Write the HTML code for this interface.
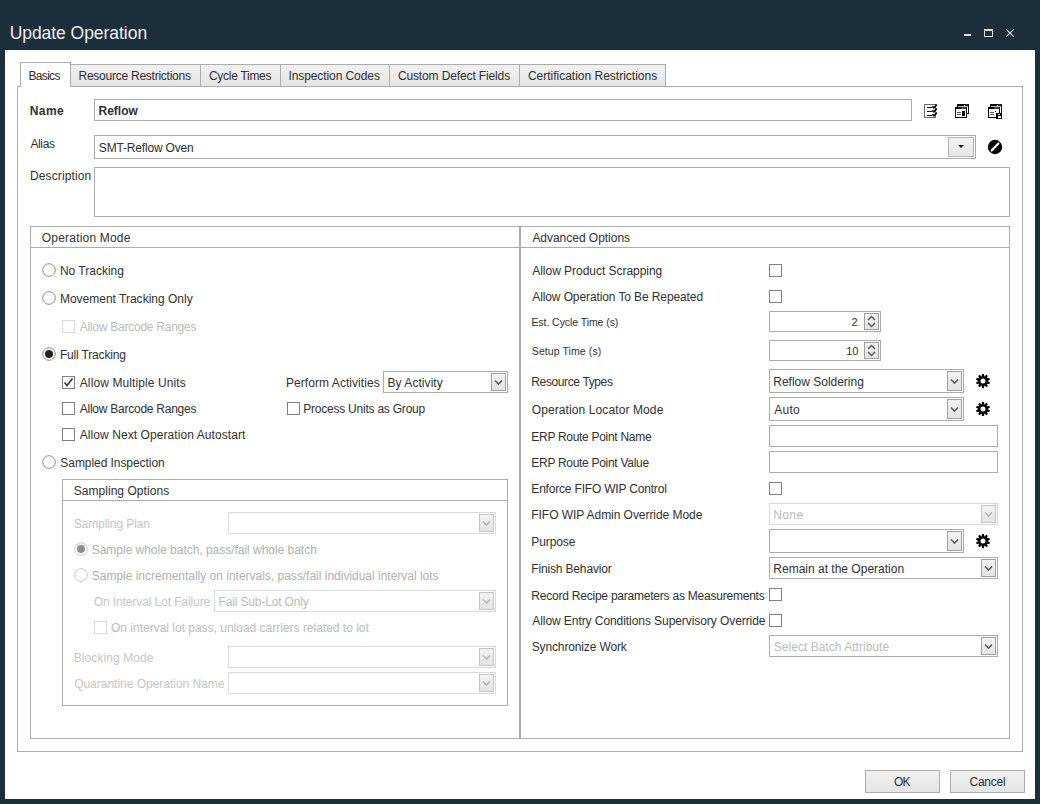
<!DOCTYPE html>
<html><head><meta charset="utf-8"><title>Update Operation</title>
<style>
html,body{margin:0;padding:0;}
body{width:1040px;height:804px;overflow:hidden;background:#1b2f3d;position:relative;font-family:"Liberation Sans", sans-serif;}
body>div,body>span,body>svg{position:absolute;box-sizing:border-box;}
body>span{white-space:pre;}
</style></head><body>
<div style="left:5px;top:50px;width:1030px;height:749px;border:0;background:#ffffff;"></div>
<span style="top:25.19px;font-size:17.5px;line-height:17.5px;color:#f0f0f0;letter-spacing:-0.045px;left:9.65px;">Update Operation</span>
<div style="left:964px;top:34px;width:7px;height:2px;border:0;background:#e0e0e0;"></div>
<div style="left:984px;top:29px;width:9px;height:8px;border:1px solid #e0e0e0;border-top-width:2px"></div>
<svg style="left:1005px;top:28px" width="10" height="10" viewBox="0 0 10 10"><path d="M1.3 1.3 L8.7 8.7 M8.7 1.3 L1.3 8.7" stroke="#e0e0e0" stroke-width="1.2"/></svg>
<div style="left:17px;top:86px;width:1006px;height:666px;border:1px solid #acacac;background:#fff;"></div>
<div style="left:70px;top:64px;width:131px;height:23px;border:1px solid #acacac;background:linear-gradient(#f0f0f0,#e5e5e5);"></div>
<span style="top:69.84px;font-size:12px;line-height:12px;color:#303030;letter-spacing:-0.248px;left:78.52px;">Resource Restrictions</span>
<div style="left:200px;top:64px;width:81px;height:23px;border:1px solid #acacac;background:linear-gradient(#f0f0f0,#e5e5e5);"></div>
<span style="top:69.84px;font-size:12px;line-height:12px;color:#303030;letter-spacing:-0.270px;left:208.89px;">Cycle Times</span>
<div style="left:280px;top:64px;width:110px;height:23px;border:1px solid #acacac;background:linear-gradient(#f0f0f0,#e5e5e5);"></div>
<span style="top:69.84px;font-size:12px;line-height:12px;color:#303030;letter-spacing:-0.080px;left:288.39px;">Inspection Codes</span>
<div style="left:389px;top:64px;width:131px;height:23px;border:1px solid #acacac;background:linear-gradient(#f0f0f0,#e5e5e5);"></div>
<span style="top:69.84px;font-size:12px;line-height:12px;color:#303030;letter-spacing:-0.127px;left:397.89px;">Custom Defect Fields</span>
<div style="left:519px;top:64px;width:147px;height:23px;border:1px solid #acacac;background:linear-gradient(#f0f0f0,#e5e5e5);"></div>
<span style="top:69.84px;font-size:12px;line-height:12px;color:#303030;letter-spacing:-0.003px;left:527.89px;">Certification Restrictions</span>
<div style="left:20px;top:62px;width:51px;height:25px;border:1px solid #acacac;border-bottom:0;background:#fff"></div>
<span style="top:69.84px;font-size:12px;line-height:12px;color:#303030;letter-spacing:-0.685px;left:28.52px;">Basics</span>
<span style="top:104.84px;font-size:12px;line-height:12px;color:#303030;letter-spacing:0.442px;font-weight:bold;left:29.70px;">Name</span>
<div style="left:94px;top:99px;width:818px;height:22px;border:1px solid #ababab;background:#fff;"></div>
<span style="top:104.84px;font-size:12px;line-height:12px;color:#303030;letter-spacing:-0.033px;font-weight:bold;left:98.60px;">Reflow</span>
<span style="top:137.84px;font-size:12px;line-height:12px;color:#303030;letter-spacing:-0.390px;left:30.48px;">Alias</span>
<div style="left:94px;top:135px;width:882px;height:24px;border:1px solid #ababab;background:#fff;"></div>
<div style="left:948px;top:137px;width:26px;height:20px;border:1px solid #b4b4b4;background:linear-gradient(#f3f3f3,#e6e6e6);"></div>
<svg style="left:957px;top:144px" width="8" height="5" viewBox="0 0 8 5"><path d="M1 1 L7 1 L4 4 Z" fill="#111"/></svg>
<span style="top:141.84px;font-size:12px;line-height:12px;color:#303030;letter-spacing:-0.181px;left:98.86px;">SMT-Reflow Oven</span>
<span style="top:169.84px;font-size:12px;line-height:12px;color:#303030;letter-spacing:0.123px;left:30.02px;">Description</span>
<div style="left:94px;top:167px;width:916px;height:50px;border:1px solid #ababab;background:#fff;"></div>
<svg style="left:921px;top:101px" width="20" height="20" viewBox="0 0 20 20" shape-rendering="crispEdges">
<rect x="3.5" y="3.5" width="11" height="13" fill="#fff" stroke="#6a6a6a" stroke-width="1"/>
<path d="M6 6.5h4.5M6 10.5h4.5M6 14.5h4.5" stroke="#111" stroke-width="1"/>
<g shape-rendering="geometricPrecision" fill="none" stroke="#000" stroke-width="1.6"><path d="M11.3 5.2 L12.9 6.9 L15.8 3.6M11.3 9.2 L12.9 10.9 L15.8 7.6M11.3 13.2 L12.9 14.9 L15.8 11.6"/></g>
</svg>
<svg style="left:952px;top:101px" width="20" height="20" viewBox="0 0 20 20" shape-rendering="crispEdges"><rect x="5.5" y="3.5" width="11" height="9" fill="#fff" stroke="#111" stroke-width="1"/>
<rect x="6" y="3" width="6" height="2" fill="#000"/><rect x="13" y="3" width="3" height="2" fill="#222"/>
<rect x="6" y="5" width="10" height="1" fill="#bbb"/>
<rect x="3.5" y="6.5" width="11" height="10" fill="#fff" stroke="#000" stroke-width="1.3"/>
<rect x="3" y="6" width="6" height="2" fill="#000"/><rect x="9" y="6" width="5" height="2" fill="#444"/>
<rect x="5" y="11" width="4" height="1" fill="#555"/><rect x="5" y="13" width="4" height="1" fill="#555"/>
<rect x="10" y="10" width="3" height="5" fill="#000"/>
</svg>
<svg style="left:985px;top:101px" width="20" height="20" viewBox="0 0 20 20" shape-rendering="crispEdges"><rect x="5.5" y="3.5" width="11" height="9" fill="#fff" stroke="#111" stroke-width="1"/>
<rect x="6" y="3" width="6" height="2" fill="#000"/><rect x="13" y="3" width="3" height="2" fill="#222"/>
<rect x="6" y="5" width="10" height="1" fill="#bbb"/>
<rect x="3.5" y="6.5" width="11" height="10" fill="#fff" stroke="#000" stroke-width="1.3"/>
<rect x="3" y="6" width="6" height="2" fill="#000"/><rect x="9" y="6" width="5" height="2" fill="#444"/>
<rect x="5" y="11" width="4" height="1" fill="#555"/><rect x="5" y="13" width="4" height="1" fill="#555"/>
<rect x="10" y="10" width="1" height="1" fill="#000"/>
<rect x="11" y="12" width="6" height="6" fill="#000"/>
<rect x="13" y="13" width="2" height="1" fill="#fff"/>
<rect x="13" y="15" width="3" height="2" fill="#fff"/>
</svg>
<svg style="left:987px;top:139px" width="16" height="16" viewBox="0 0 16 16"><circle cx="8" cy="8" r="7.2" fill="#000"/><path d="M4.6 11.4 L11.4 4.6" stroke="#fff" stroke-width="2.1" stroke-linecap="round"/></svg>
<div style="left:30px;top:226px;width:490px;height:513px;border:1px solid #acacac;background:transparent;"></div>
<div style="left:31px;top:247px;width:488px;height:1px;border:0;background:#acacac;"></div>
<span style="top:231.84px;font-size:12px;line-height:12px;color:#303030;letter-spacing:0.195px;left:41.83px;">Operation Mode</span>
<div style="left:520px;top:226px;width:490px;height:513px;border:1px solid #acacac;background:transparent;"></div>
<div style="left:521px;top:247px;width:488px;height:1px;border:0;background:#acacac;"></div>
<span style="top:231.84px;font-size:12px;line-height:12px;color:#303030;letter-spacing:-0.027px;left:532.38px;">Advanced Options</span>
<svg style="left:42px;top:263px" width="14" height="14" viewBox="0 0 14 14"><circle cx="7" cy="7" r="6.3" fill="#fff" stroke="#8a8a8a" stroke-width="1"/></svg>
<span style="top:264.84px;font-size:12px;line-height:12px;color:#303030;letter-spacing:-0.002px;left:59.92px;">No Tracking</span>
<svg style="left:42px;top:291px" width="14" height="14" viewBox="0 0 14 14"><circle cx="7" cy="7" r="6.3" fill="#fff" stroke="#8a8a8a" stroke-width="1"/></svg>
<span style="top:292.84px;font-size:12px;line-height:12px;color:#303030;letter-spacing:0.002px;left:59.92px;">Movement Tracking Only</span>
<div style="left:62px;top:320px;width:13px;height:13px;border:1px solid #d9d9d9;background:#fff"></div>
<span style="top:320.84px;font-size:12px;line-height:12px;color:#bcbcbc;letter-spacing:-0.247px;left:79.78px;">Allow Barcode Ranges</span>
<svg style="left:42px;top:347px" width="14" height="14" viewBox="0 0 14 14"><circle cx="7" cy="7" r="6.3" fill="#fff" stroke="#8a8a8a" stroke-width="1"/><circle cx="7" cy="7" r="4" fill="#222"/></svg>
<span style="top:348.84px;font-size:12px;line-height:12px;color:#303030;letter-spacing:-0.169px;left:59.92px;">Full Tracking</span>
<div style="left:62px;top:376px;width:13px;height:13px;border:1px solid #7f7f7f;background:#fff"></div>
<svg style="left:62px;top:376px" width="13" height="13" viewBox="0 0 13 13"><path d="M2.5 6.5 L5 9.5 L10.5 2.5" fill="none" stroke="#333" stroke-width="1.6"/></svg>
<span style="top:376.84px;font-size:12px;line-height:12px;color:#303030;letter-spacing:0.101px;left:79.78px;">Allow Multiple Units</span>
<div style="left:62px;top:402px;width:13px;height:13px;border:1px solid #7f7f7f;background:#fff"></div>
<span style="top:402.84px;font-size:12px;line-height:12px;color:#303030;letter-spacing:-0.247px;left:79.78px;">Allow Barcode Ranges</span>
<div style="left:62px;top:428px;width:13px;height:13px;border:1px solid #7f7f7f;background:#fff"></div>
<span style="top:428.84px;font-size:12px;line-height:12px;color:#303030;letter-spacing:0.075px;left:79.78px;">Allow Next Operation Autostart</span>
<svg style="left:42px;top:455px" width="14" height="14" viewBox="0 0 14 14"><circle cx="7" cy="7" r="6.3" fill="#fff" stroke="#8a8a8a" stroke-width="1"/></svg>
<span style="top:456.84px;font-size:12px;line-height:12px;color:#303030;letter-spacing:-0.064px;left:60.36px;">Sampled Inspection</span>
<span style="top:376.84px;font-size:12px;line-height:12px;color:#303030;letter-spacing:0.057px;left:286.02px;">Perform Activities</span>
<div style="left:383px;top:371px;width:125px;height:22px;border:1px solid #ababab;background:#fff;"></div>
<div style="left:491px;top:373px;width:15px;height:18px;border:1px solid #a0a0a0;background:linear-gradient(#f2f2f2,#e4e4e4);"></div>
<svg style="left:494px;top:378.5px" width="9" height="7" viewBox="0 0 9 7"><path d="M1 1.5 L4.5 5 L8 1.5" fill="none" stroke="#5a5a5a" stroke-width="1.6"/></svg>
<span style="top:376.84px;font-size:12px;line-height:12px;color:#303030;letter-spacing:0.057px;left:387.52px;">By Activity</span>
<div style="left:287px;top:402px;width:13px;height:13px;border:1px solid #7f7f7f;background:#fff"></div>
<span style="top:402.84px;font-size:12px;line-height:12px;color:#303030;letter-spacing:-0.225px;left:303.22px;">Process Units as Group</span>
<div style="left:62px;top:479px;width:446px;height:227px;border:1px solid #acacac;background:transparent;"></div>
<div style="left:63px;top:500px;width:444px;height:1px;border:0;background:#acacac;"></div>
<span style="top:484.84px;font-size:12px;line-height:12px;color:#303030;letter-spacing:0.051px;left:73.66px;">Sampling Options</span>
<span style="top:517.84px;font-size:12px;line-height:12px;color:#c6c6c6;letter-spacing:-0.089px;left:73.66px;">Sampling Plan</span>
<div style="left:228px;top:512px;width:268px;height:22px;border:1px solid #d9d9d9;background:#fff;"></div>
<div style="left:479px;top:514px;width:15px;height:18px;border:1px solid #c4c4c4;background:linear-gradient(#f2f2f2,#e4e4e4);"></div>
<svg style="left:482px;top:519.5px" width="9" height="7" viewBox="0 0 9 7"><path d="M1 1.5 L4.5 5 L8 1.5" fill="none" stroke="#b8b8b8" stroke-width="1.6"/></svg>
<svg style="left:74px;top:542px" width="14" height="14" viewBox="0 0 14 14"><circle cx="7" cy="7" r="6.3" fill="#fff" stroke="#c6c6c6" stroke-width="1"/><circle cx="7" cy="7" r="4" fill="#8f8f8f"/></svg>
<span style="top:543.84px;font-size:12px;line-height:12px;color:#b0b0b0;letter-spacing:-0.027px;left:91.76px;">Sample whole batch, pass/fail whole batch</span>
<svg style="left:74px;top:568px" width="14" height="14" viewBox="0 0 14 14"><circle cx="7" cy="7" r="6.3" fill="#fff" stroke="#c6c6c6" stroke-width="1"/></svg>
<span style="top:569.84px;font-size:12px;line-height:12px;color:#b0b0b0;letter-spacing:-0.010px;left:91.76px;">Sample incrementally on intervals, pass/fail individual interval lots</span>
<span style="top:595.84px;font-size:12px;line-height:12px;color:#c6c6c6;letter-spacing:-0.101px;left:93.73px;">On Interval Lot Failure</span>
<div style="left:214px;top:590px;width:282px;height:22px;border:1px solid #d9d9d9;background:#fff;"></div>
<div style="left:479px;top:592px;width:15px;height:18px;border:1px solid #c4c4c4;background:linear-gradient(#f2f2f2,#e4e4e4);"></div>
<svg style="left:482px;top:597.5px" width="9" height="7" viewBox="0 0 9 7"><path d="M1 1.5 L4.5 5 L8 1.5" fill="none" stroke="#b8b8b8" stroke-width="1.6"/></svg>
<span style="top:595.84px;font-size:12px;line-height:12px;color:#bcbcbc;letter-spacing:-0.151px;left:218.52px;">Fail Sub-Lot Only</span>
<div style="left:94px;top:621px;width:13px;height:13px;border:1px solid #d9d9d9;background:#fff"></div>
<span style="top:621.84px;font-size:12px;line-height:12px;color:#bcbcbc;letter-spacing:-0.006px;left:111.03px;">On interval lot pass, unload carriers related to lot</span>
<span style="top:651.84px;font-size:12px;line-height:12px;color:#c6c6c6;letter-spacing:0.087px;left:73.72px;">Blocking Mode</span>
<div style="left:228px;top:646px;width:268px;height:22px;border:1px solid #d9d9d9;background:#fff;"></div>
<div style="left:479px;top:648px;width:15px;height:18px;border:1px solid #c4c4c4;background:linear-gradient(#f2f2f2,#e4e4e4);"></div>
<svg style="left:482px;top:653.5px" width="9" height="7" viewBox="0 0 9 7"><path d="M1 1.5 L4.5 5 L8 1.5" fill="none" stroke="#b8b8b8" stroke-width="1.6"/></svg>
<span style="top:677.84px;font-size:12px;line-height:12px;color:#c6c6c6;letter-spacing:-0.015px;left:74.13px;">Quarantine Operation Name</span>
<div style="left:228px;top:672px;width:268px;height:22px;border:1px solid #d9d9d9;background:#fff;"></div>
<div style="left:479px;top:674px;width:15px;height:18px;border:1px solid #c4c4c4;background:linear-gradient(#f2f2f2,#e4e4e4);"></div>
<svg style="left:482px;top:679.5px" width="9" height="7" viewBox="0 0 9 7"><path d="M1 1.5 L4.5 5 L8 1.5" fill="none" stroke="#b8b8b8" stroke-width="1.6"/></svg>
<span style="top:264.84px;font-size:12px;line-height:12px;color:#303030;letter-spacing:-0.034px;left:532.28px;">Allow Product Scrapping</span>
<div style="left:769px;top:264px;width:13px;height:13px;border:1px solid #7f7f7f;background:#fff"></div>
<span style="top:290.84px;font-size:12px;line-height:12px;color:#303030;letter-spacing:-0.107px;left:532.28px;">Allow Operation To Be Repeated</span>
<div style="left:769px;top:290px;width:13px;height:13px;border:1px solid #7f7f7f;background:#fff"></div>
<span style="top:317.11px;font-size:10.5px;line-height:10.5px;color:#303030;letter-spacing:-0.066px;left:531.44px;">Est. Cycle Time (s)</span>
<div style="left:769px;top:311px;width:112px;height:21px;border:1px solid #ababab;background:#fff;"></div>
<div style="left:864px;top:313px;width:15px;height:17px;border:1px solid #a0a0a0;background:linear-gradient(#f2f2f2,#e4e4e4);"></div>
<svg style="left:866px;top:314px" width="11" height="15" viewBox="0 0 11 15"><path d="M2 6 L5.5 2.5 L9 6 M2 9 L5.5 12.5 L9 9" fill="none" stroke="#5a5a5a" stroke-width="1.5"/></svg>
<span style="top:316.69px;font-size:11px;line-height:11px;color:#303030;letter-spacing:0.881px;left:851.55px;">2</span>
<span style="top:346.11px;font-size:10.5px;line-height:10.5px;color:#303030;letter-spacing:0.088px;left:531.82px;">Setup Time (s)</span>
<div style="left:769px;top:340px;width:112px;height:21px;border:1px solid #ababab;background:#fff;"></div>
<div style="left:864px;top:342px;width:15px;height:17px;border:1px solid #a0a0a0;background:linear-gradient(#f2f2f2,#e4e4e4);"></div>
<svg style="left:866px;top:343px" width="11" height="15" viewBox="0 0 11 15"><path d="M2 6 L5.5 2.5 L9 6 M2 9 L5.5 12.5 L9 9" fill="none" stroke="#5a5a5a" stroke-width="1.5"/></svg>
<span style="top:345.69px;font-size:11px;line-height:11px;color:#303030;letter-spacing:0.018px;left:846.16px;">10</span>
<span style="top:375.84px;font-size:12px;line-height:12px;color:#303030;letter-spacing:-0.376px;left:531.32px;">Resource Types</span>
<div style="left:769px;top:369px;width:195px;height:24px;border:1px solid #ababab;background:#fff;"></div>
<div style="left:947px;top:371px;width:15px;height:20px;border:1px solid #a0a0a0;background:linear-gradient(#f2f2f2,#e4e4e4);"></div>
<svg style="left:950px;top:377.5px" width="9" height="7" viewBox="0 0 9 7"><path d="M1 1.5 L4.5 5 L8 1.5" fill="none" stroke="#5a5a5a" stroke-width="1.6"/></svg>
<span style="top:375.84px;font-size:12px;line-height:12px;color:#303030;letter-spacing:-0.014px;left:773.32px;">Reflow Soldering</span>
<svg style="left:975px;top:373px" width="16" height="16" viewBox="-8 -8 16 16"><path fill="#000" fill-rule="evenodd" d="M-1.31 -4.72 L-1.05 -6.92 L1.05 -6.92 L1.31 -4.72 L1.72 -4.59 L3.22 -6.21 L4.91 -4.98 L3.83 -3.05 L4.09 -2.70 L6.26 -3.13 L6.91 -1.14 L4.90 -0.22 L4.90 0.22 L6.91 1.14 L6.26 3.13 L4.09 2.70 L3.83 3.05 L4.91 4.98 L3.22 6.21 L1.72 4.59 L1.31 4.72 L1.05 6.92 L-1.05 6.92 L-1.31 4.72 L-1.72 4.59 L-3.22 6.21 L-4.91 4.98 L-3.83 3.05 L-4.09 2.70 L-6.26 3.13 L-6.91 1.14 L-4.90 0.22 L-4.90 -0.22 L-6.91 -1.14 L-6.26 -3.13 L-4.09 -2.70 L-3.83 -3.05 L-4.91 -4.98 L-3.22 -6.21 L-1.72 -4.59 Z M2.5 0 A2.5 2.5 0 1 0 -2.5 0 A2.5 2.5 0 1 0 2.5 0 Z"/></svg>
<span style="top:403.84px;font-size:12px;line-height:12px;color:#303030;letter-spacing:0.104px;left:531.73px;">Operation Locator Mode</span>
<div style="left:769px;top:397px;width:195px;height:24px;border:1px solid #ababab;background:#fff;"></div>
<div style="left:947px;top:399px;width:15px;height:20px;border:1px solid #a0a0a0;background:linear-gradient(#f2f2f2,#e4e4e4);"></div>
<svg style="left:950px;top:405.5px" width="9" height="7" viewBox="0 0 9 7"><path d="M1 1.5 L4.5 5 L8 1.5" fill="none" stroke="#5a5a5a" stroke-width="1.6"/></svg>
<span style="top:403.84px;font-size:12px;line-height:12px;color:#303030;letter-spacing:0.280px;left:774.28px;">Auto</span>
<svg style="left:975px;top:401px" width="16" height="16" viewBox="-8 -8 16 16"><path fill="#000" fill-rule="evenodd" d="M-1.31 -4.72 L-1.05 -6.92 L1.05 -6.92 L1.31 -4.72 L1.72 -4.59 L3.22 -6.21 L4.91 -4.98 L3.83 -3.05 L4.09 -2.70 L6.26 -3.13 L6.91 -1.14 L4.90 -0.22 L4.90 0.22 L6.91 1.14 L6.26 3.13 L4.09 2.70 L3.83 3.05 L4.91 4.98 L3.22 6.21 L1.72 4.59 L1.31 4.72 L1.05 6.92 L-1.05 6.92 L-1.31 4.72 L-1.72 4.59 L-3.22 6.21 L-4.91 4.98 L-3.83 3.05 L-4.09 2.70 L-6.26 3.13 L-6.91 1.14 L-4.90 0.22 L-4.90 -0.22 L-6.91 -1.14 L-6.26 -3.13 L-4.09 -2.70 L-3.83 -3.05 L-4.91 -4.98 L-3.22 -6.21 L-1.72 -4.59 Z M2.5 0 A2.5 2.5 0 1 0 -2.5 0 A2.5 2.5 0 1 0 2.5 0 Z"/></svg>
<span style="top:430.84px;font-size:12px;line-height:12px;color:#303030;letter-spacing:-0.293px;left:531.32px;">ERP Route Point Name</span>
<div style="left:769px;top:425px;width:229px;height:22px;border:1px solid #ababab;background:#fff;"></div>
<span style="top:456.84px;font-size:12px;line-height:12px;color:#303030;letter-spacing:-0.294px;left:531.32px;">ERP Route Point Value</span>
<div style="left:769px;top:451px;width:229px;height:22px;border:1px solid #ababab;background:#fff;"></div>
<span style="top:482.84px;font-size:12px;line-height:12px;color:#303030;letter-spacing:-0.187px;left:531.32px;">Enforce FIFO WIP Control</span>
<div style="left:769px;top:482px;width:13px;height:13px;border:1px solid #7f7f7f;background:#fff"></div>
<span style="top:508.84px;font-size:12px;line-height:12px;color:#303030;letter-spacing:-0.055px;left:531.32px;">FIFO WIP Admin Override Mode</span>
<div style="left:769px;top:503px;width:229px;height:22px;border:1px solid #d9d9d9;background:#fff;"></div>
<div style="left:981px;top:505px;width:15px;height:18px;border:1px solid #c4c4c4;background:linear-gradient(#f2f2f2,#e4e4e4);"></div>
<svg style="left:984px;top:510.5px" width="9" height="7" viewBox="0 0 9 7"><path d="M1 1.5 L4.5 5 L8 1.5" fill="none" stroke="#b8b8b8" stroke-width="1.6"/></svg>
<span style="top:508.84px;font-size:12px;line-height:12px;color:#bcbcbc;letter-spacing:0.360px;left:773.32px;">None</span>
<span style="top:535.84px;font-size:12px;line-height:12px;color:#303030;letter-spacing:-0.114px;left:531.32px;">Purpose</span>
<div style="left:769px;top:529px;width:195px;height:24px;border:1px solid #ababab;background:#fff;"></div>
<div style="left:947px;top:531px;width:15px;height:20px;border:1px solid #a0a0a0;background:linear-gradient(#f2f2f2,#e4e4e4);"></div>
<svg style="left:950px;top:537.5px" width="9" height="7" viewBox="0 0 9 7"><path d="M1 1.5 L4.5 5 L8 1.5" fill="none" stroke="#5a5a5a" stroke-width="1.6"/></svg>
<svg style="left:975px;top:533px" width="16" height="16" viewBox="-8 -8 16 16"><path fill="#000" fill-rule="evenodd" d="M-1.31 -4.72 L-1.05 -6.92 L1.05 -6.92 L1.31 -4.72 L1.72 -4.59 L3.22 -6.21 L4.91 -4.98 L3.83 -3.05 L4.09 -2.70 L6.26 -3.13 L6.91 -1.14 L4.90 -0.22 L4.90 0.22 L6.91 1.14 L6.26 3.13 L4.09 2.70 L3.83 3.05 L4.91 4.98 L3.22 6.21 L1.72 4.59 L1.31 4.72 L1.05 6.92 L-1.05 6.92 L-1.31 4.72 L-1.72 4.59 L-3.22 6.21 L-4.91 4.98 L-3.83 3.05 L-4.09 2.70 L-6.26 3.13 L-6.91 1.14 L-4.90 0.22 L-4.90 -0.22 L-6.91 -1.14 L-6.26 -3.13 L-4.09 -2.70 L-3.83 -3.05 L-4.91 -4.98 L-3.22 -6.21 L-1.72 -4.59 Z M2.5 0 A2.5 2.5 0 1 0 -2.5 0 A2.5 2.5 0 1 0 2.5 0 Z"/></svg>
<span style="top:562.84px;font-size:12px;line-height:12px;color:#303030;letter-spacing:-0.163px;left:531.32px;">Finish Behavior</span>
<div style="left:769px;top:557px;width:229px;height:22px;border:1px solid #ababab;background:#fff;"></div>
<div style="left:981px;top:559px;width:15px;height:18px;border:1px solid #a0a0a0;background:linear-gradient(#f2f2f2,#e4e4e4);"></div>
<svg style="left:984px;top:564.5px" width="9" height="7" viewBox="0 0 9 7"><path d="M1 1.5 L4.5 5 L8 1.5" fill="none" stroke="#5a5a5a" stroke-width="1.6"/></svg>
<span style="top:562.84px;font-size:12px;line-height:12px;color:#303030;letter-spacing:0.001px;left:773.32px;">Remain at the Operation</span>
<span style="top:589.84px;font-size:12px;line-height:12px;color:#303030;letter-spacing:-0.223px;left:531.32px;">Record Recipe parameters as Measurements</span>
<div style="left:769px;top:588px;width:13px;height:13px;border:1px solid #7f7f7f;background:#fff"></div>
<span style="top:614.84px;font-size:12px;line-height:12px;color:#303030;letter-spacing:-0.068px;left:532.28px;">Allow Entry Conditions Supervisory Override</span>
<div style="left:769px;top:614px;width:13px;height:13px;border:1px solid #7f7f7f;background:#fff"></div>
<span style="top:640.84px;font-size:12px;line-height:12px;color:#303030;letter-spacing:-0.142px;left:531.76px;">Synchronize Work</span>
<div style="left:769px;top:635px;width:229px;height:22px;border:1px solid #ababab;background:#fff;"></div>
<div style="left:981px;top:637px;width:15px;height:18px;border:1px solid #a0a0a0;background:linear-gradient(#f2f2f2,#e4e4e4);"></div>
<svg style="left:984px;top:642.5px" width="9" height="7" viewBox="0 0 9 7"><path d="M1 1.5 L4.5 5 L8 1.5" fill="none" stroke="#5a5a5a" stroke-width="1.6"/></svg>
<span style="top:640.84px;font-size:12px;line-height:12px;color:#bcbcbc;letter-spacing:0.028px;left:773.76px;">Select Batch Attribute</span>
<div style="left:865px;top:770px;width:75px;height:23px;border:1px solid #adadad;background:linear-gradient(#f0f0f0,#e5e5e5);"></div>
<span style="top:775.84px;font-size:12px;line-height:12px;color:#303030;letter-spacing:-0.941px;left:894.08px;">OK</span>
<div style="left:950px;top:770px;width:75px;height:23px;border:1px solid #adadad;background:linear-gradient(#f0f0f0,#e5e5e5);"></div>
<span style="top:775.84px;font-size:12px;line-height:12px;color:#303030;letter-spacing:-0.249px;left:969.54px;">Cancel</span>
</body></html>
